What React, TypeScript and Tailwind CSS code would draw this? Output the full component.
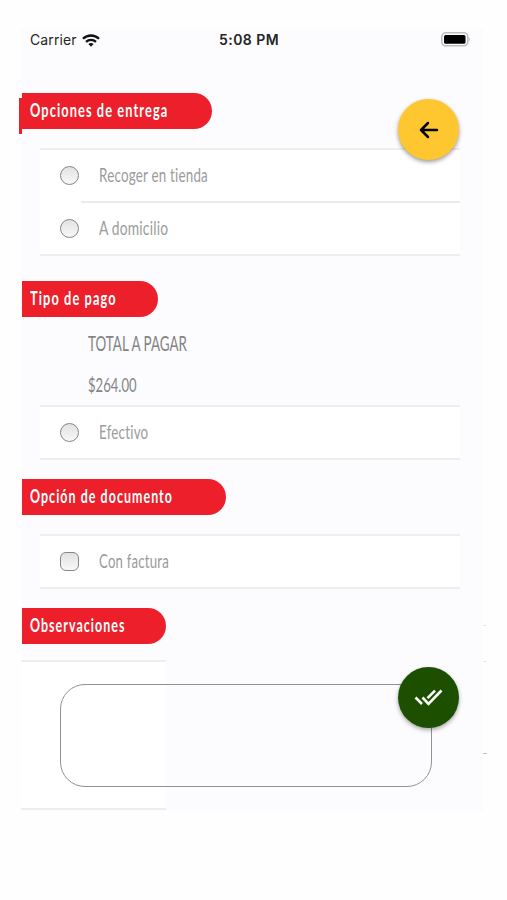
import { useState } from 'react';
import type { ReactNode } from 'react';
import clsx from 'clsx';

function SectionTag({ label, className, textClass }: { label: string; className?: string; textClass: string }) {
  return (
    <h2
      className={clsx(
        'ml-px h-9 bg-[#ec1f2b] rounded-r-full text-white font-bold text-[18.5px] leading-[34px] pl-2 whitespace-nowrap',
        className
      )}
    >
      <span className={clsx('inline-block origin-left tracking-[1.6px]', textClass)}>{label}</span>
    </h2>
  );
}

function OptionRow({
  label,
  textClass,
  square,
  checked,
  onToggle,
}: {
  label: string;
  textClass: string;
  square?: boolean;
  checked: boolean;
  onToggle: () => void;
}) {
  return (
    <button onClick={onToggle} className="flex h-[51px] w-full items-center pl-5 text-left">
      <span
        className={clsx(
          'mb-px block size-[19px] shrink-0 border-[1.5px] border-[#858585] bg-linear-to-b from-[#e2e2e2] to-[#f8f8f8]',
          square ? 'rounded-[6px]' : 'rounded-full',
          checked && 'ring-2 ring-inset ring-[#ec1f2b]'
        )}
      />
      <span
        className={clsx(
          'ml-5 mb-[3px] inline-block origin-left whitespace-nowrap text-[20px] leading-6 tracking-[0.3px] text-[#9b9b9b]',
          textClass
        )}
      >
        {label}
      </span>
    </button>
  );
}

function OptionList({ children, className }: { children: ReactNode; className?: string }) {
  return (
    <div className={clsx('ml-[19px] w-[420px] border-y-2 border-[#eeeef0] bg-white', className)}>{children}</div>
  );
}

export default function App() {
  const [delivery, setDelivery] = useState('');
  const [cash, setCash] = useState(false);
  const [invoice, setInvoice] = useState(false);

  return (
    <div className="relative h-[900px] w-[507px] overflow-hidden bg-[#fefefe] pl-[21px] pt-7 font-['Lato',sans-serif] [font-variant-ligatures:none]">
      <div className="relative h-[783px] w-[462px] bg-[#fcfcfe]">
        {/* Status bar */}
        <div className="flex h-6 items-center pl-[9px] pr-3 font-['Inter',sans-serif] text-[14px] text-[#252525]">
          <span className="mb-px w-[52px] tracking-[0.1px]">Carrier</span>
          <svg width="18" height="13" viewBox="0 0 18 13" fill="none" stroke="#111" strokeWidth="2.3">
            <path d="M1 4.8C5.5.4 12.5.4 17 4.8" />
            <path d="M4 7.9c2.9-2.8 7.1-2.8 10 0" />
            <path d="M6.4 10.1c1.5-1.4 3.7-1.4 5.2 0L9 12.7z" fill="#111" stroke="none" />
          </svg>
          <span className="mb-px ml-[119px] font-semibold tracking-[0.45px] whitespace-nowrap">5:08 PM</span>
          <svg className="mb-px ml-auto" width="30" height="15" viewBox="0 0 30 15">
            <rect x=".8" y=".8" width="26" height="13" rx="4" fill="#fff" stroke="#bdbdbf" strokeWidth="1.6" />
            <rect x="3" y="3" width="21.5" height="8.7" rx="1.5" fill="#000" />
            <path d="M28 5.3q2 2 0 4z" fill="#bdbdbf" />
          </svg>
        </div>

        {/* Delivery */}
        <div className="relative mt-[41px]">
          <span className="absolute -left-0.5 top-[5px] h-9 w-[3px] bg-[#ec1f2b]" />
          <SectionTag label="Opciones de entrega" className="w-[190px]" textClass="scale-x-[0.69]" />
        </div>
        <OptionList className="mt-[19px]">
          <OptionRow
            label="Recoger en tienda"
            textClass="scale-x-[0.67]"
            checked={delivery === 'store'}
            onToggle={() => setDelivery('store')}
          />
          <div className="ml-[41px] h-0.5 bg-[#ebebed]" />
          <OptionRow
            label="A domicilio"
            textClass="scale-x-[0.69]"
            checked={delivery === 'home'}
            onToggle={() => setDelivery('home')}
          />
        </OptionList>

        {/* Payment */}
        <SectionTag label="Tipo de pago" className="mt-[25px] w-[136px]" textClass="scale-x-[0.69]" />
        <div className="h-[88px] pl-[67px] pt-[13px] text-[#848484] whitespace-nowrap">
          <p className="text-[21px] leading-[26px]">
            <span className="inline-block origin-left scale-x-[0.64]">TOTAL A PAGAR</span>
          </p>
          <p className="mt-[17px] text-[19.5px] leading-6">
            <span className="inline-block origin-left scale-x-[0.67]">$264.00</span>
          </p>
        </div>
        <OptionList>
          <OptionRow label="Efectivo" textClass="scale-x-[0.67]" checked={cash} onToggle={() => setCash(!cash)} />
        </OptionList>

        {/* Document */}
        <SectionTag label="Opción de documento" className="mt-[19px] w-[204px]" textClass="scale-x-[0.67]" />
        <OptionList className="mt-[19px]">
          <OptionRow
            square
            label="Con factura"
            textClass="scale-x-[0.66]"
            checked={invoice}
            onToggle={() => setInvoice(!invoice)}
          />
        </OptionList>

        {/* Notes */}
        <SectionTag label="Observaciones" className="mt-[19px] w-[144px]" textClass="scale-x-[0.67]" />
        <div className="mt-4 h-[150px] w-[145px] border-y-2 border-[#eeeef0] bg-white pl-[39px] pt-[22px]">
          <textarea className="block h-[103px] w-[372px] resize-none rounded-[25px] border border-[#929292] bg-transparent p-4 outline-none" />
        </div>

        {/* Floating buttons */}
        <button
          aria-label="Regresar"
          className="absolute left-[377px] top-[71px] flex size-[61px] items-center justify-center rounded-full bg-[#ffc72f] shadow-[0_2px_4px_rgba(0,0,0,0.4)]"
        >
          <svg width="20" height="18" viewBox="0 0 20 18" fill="none" stroke="#000" strokeWidth="2.5" strokeLinecap="round" strokeLinejoin="round">
            <path d="M18 9H2M9 2 2 9l7 7" />
          </svg>
        </button>
        <button
          aria-label="Confirmar"
          className="absolute left-[377px] top-[639px] flex size-[61px] items-center justify-center rounded-full bg-[#1c5000] shadow-[0_2px_4px_rgba(0,0,0,0.35)]"
        >
          <svg width="30" height="18" viewBox="0 0 30 18" fill="none" stroke="#fff" strokeWidth="2.6">
            <path d="m1.5 8.5 6.5 6.5M8.5 8.5l6 6.3L27.5 1.5M13.5 9.2 21 1.7" />
          </svg>
        </button>
      </div>
      <span className="absolute left-[484px] top-[625px] h-px w-0.5 bg-[#dadada]" />
      <span className="absolute left-[484px] top-[661px] h-px w-0.5 bg-[#dadada]" />
      <span className="absolute left-[483px] top-[753px] h-px w-1 bg-[#c4c4c4]" />
    </div>
  );
}
